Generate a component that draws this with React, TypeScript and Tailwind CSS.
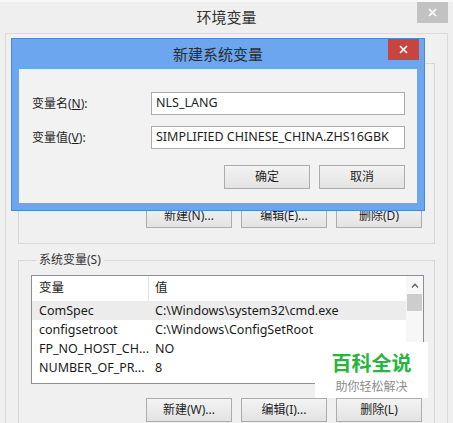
import type { ReactNode } from 'react'

function CloseGlyph() {
  return (
    <svg width="9" height="9" viewBox="0 0 9 9">
      <path d="M1 1 L8 8 M8 1 L1 8" stroke="#fff" strokeWidth="1.6" />
    </svg>
  )
}

function Btn({ children }: { children: ReactNode }) {
  return (
    <div className="flex h-[24px] w-[86px] items-center justify-center border border-[#acacac] bg-linear-to-b from-[#f3f3f3] to-[#e3e3e3] text-[12px] leading-none text-[#1e1e1e]">
      {children}
    </div>
  )
}

const rows = [
  { name: 'ComSpec', value: 'C:\\Windows\\system32\\cmd.exe', active: true },
  { name: 'configsetroot', value: 'C:\\Windows\\ConfigSetRoot' },
  { name: 'FP_NO_HOST_CH...', value: 'NO' },
  { name: 'NUMBER_OF_PR...', value: '8' },
]

function ListView() {
  return (
    <div className="flex h-[109px] overflow-hidden border border-[#8c8f96] bg-white">
      <div className="flex-1 overflow-hidden">
        <div className="flex h-[25px] items-center text-[12.5px] text-[#1a1a1a]">
          <div className="w-[116px] pl-[7px]">变量</div>
          <div className="flex h-full items-center border-l border-[#e5e5e5] pl-[6px]">值</div>
        </div>
        {rows.map((r) => (
          <div
            key={r.name}
            className={`flex h-[19px] items-center text-[12.5px] leading-[19px] text-[#1a1a1a] ${r.active ? 'bg-[#ececec]' : ''}`}
          >
            <div className="w-[116px] pl-[7px] whitespace-nowrap">{r.name}</div>
            <div className="pl-[7px] whitespace-nowrap">{r.value}</div>
          </div>
        ))}
      </div>
      <div className="flex w-[17px] flex-col bg-[#f7f7f7]">
        <div className="flex h-[18px] items-center justify-center">
          <svg width="8" height="5" viewBox="0 0 8 5">
            <path d="M1 4.5 L4 1.2 L7 4.5" stroke="#606060" strokeWidth="1.3" fill="none" />
          </svg>
        </div>
        <div className="mx-[1px] h-[17px] bg-[#cdcdcd]" />
      </div>
    </div>
  )
}

export default function App() {
  return (
    <div className="relative h-[423px] w-[453px] overflow-hidden bg-[#efefef] font-['Noto_Sans','Noto_Sans_CJK_SC',sans-serif]">
      {/* outer window caption */}
      <div className="grid h-[33px] grid-cols-[1fr_auto_1fr] border-t-2 border-[#f8f8f8]">
        <div />
        <div className="pt-[5px] text-[15px] leading-[20px] text-[#333]">环境变量</div>
        <div className="flex justify-end pr-[5px]">
          <div className="flex h-[21px] w-[31px] items-center justify-center bg-[#c2c2c2]">
            <CloseGlyph />
          </div>
        </div>
      </div>

      {/* outer window client */}
      <div className="mx-[5px] h-[390px] border-x border-t border-[#dadada] bg-[#f0f0f0] px-[12px] pt-[29px]">
        <div className="flex h-[181px] flex-col justify-end border border-[#d8d8d8] pb-[15px] pr-[12px]">
          <div className="flex justify-end gap-[9px]">
            <Btn>新建(N)...</Btn>
            <Btn>编辑(E)...</Btn>
            <Btn>删除(D)</Btn>
          </div>
        </div>

        <fieldset className="mt-[8px] min-w-0 border border-[#d8d8d8] pl-[12px] pr-[10px] pt-[7px]">
          <legend className="ml-[5px] px-[3px] text-[12px] leading-[16px] text-[#333]">系统变量(S)</legend>
          <ListView />
          <div className="mt-[14px] flex justify-end gap-[9px] pr-[2px] pb-[10px]">
            <Btn>新建(W)...</Btn>
            <Btn>编辑(I)...</Btn>
            <Btn>删除(L)</Btn>
          </div>
        </fieldset>
      </div>

      {/* new system variable dialog, floating over the window */}
      <div className="absolute left-[11px] top-[38px] flex h-[173px] w-[414px] flex-col border border-[#4d88d6] bg-[#6ba6ee]">
        <div className="grid h-[30px] grid-cols-[1fr_auto_1fr]">
          <div />
          <div className="pt-[5px] text-[15px] leading-[20px] text-[#2d2d2d]">新建系统变量</div>
          <div className="flex justify-end pr-[5px]">
            <div className="flex h-[21px] w-[31px] items-center justify-center bg-[#c8443f]">
              <CloseGlyph />
            </div>
          </div>
        </div>
        <div className="mx-[7px] mb-[7px] flex flex-1 flex-col bg-[#f2f2f2] pl-[13px] pr-[12px] pt-[23px]">
          <div className="flex flex-col gap-[11px] text-[12.5px] text-[#1e1e1e]">
            <div className="flex items-center">
              <div className="w-[119px] text-[12px]">
                变量名(<span className="underline">N</span>):
              </div>
              <div className="flex h-[23px] flex-1 items-center border border-[#acacac] bg-white pl-[4px]">NLS_LANG</div>
            </div>
            <div className="flex items-center">
              <div className="w-[119px] text-[12px]">
                变量值(<span className="underline">V</span>):
              </div>
              <div className="flex h-[23px] flex-1 items-center border border-[#acacac] bg-white pl-[4px] whitespace-nowrap">
                SIMPLIFIED CHINESE_CHINA.ZHS16GBK
              </div>
            </div>
          </div>
          <div className="mt-[16px] flex justify-end gap-[9px]">
            <Btn>确定</Btn>
            <Btn>取消</Btn>
          </div>
        </div>
      </div>

      {/* watermark */}
      <div className="absolute left-[315px] top-[342px] flex h-[56px] w-[113px] flex-col items-center bg-white pt-[6px] font-['Noto_Sans_CJK_SC',sans-serif]">
        <div className="text-[20px] font-bold leading-[29px] text-[#27b53d]">百科全说</div>
        <div className="text-[12px] leading-[17px] text-[#8c8c8c]">助你轻松解决</div>
      </div>
    </div>
  )
}
